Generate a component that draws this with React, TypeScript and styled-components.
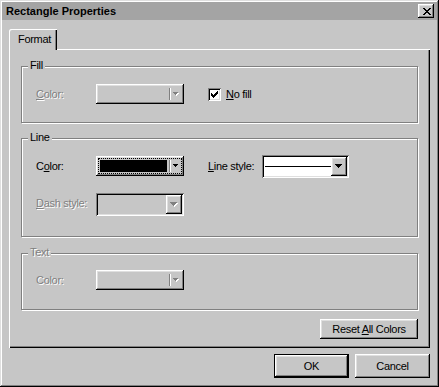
import React from "react";
import styled, { createGlobalStyle, css } from "styled-components";

const FACE = "#c6c6c6";

const GlobalStyle = createGlobalStyle`
  html, body {
    margin: 0;
    padding: 0;
    background: ${FACE};
  }
  body {
    font-family: "Liberation Sans", Arial, sans-serif;
    font-size: 11px;
    letter-spacing: -0.3px;
    color: #000;
  }
  * {
    box-sizing: border-box;
  }
`;

const raised = css`
  box-shadow: inset -1px -1px #000, inset 1px 1px #fff, inset -2px -2px #808080,
    inset 2px 2px #dfdfdf;
`;

const sunken = css`
  box-shadow: inset 1px 1px #808080, inset -1px -1px #fff, inset 2px 2px #000,
    inset -2px -2px #dfdfdf;
`;

const disabledText = css`
  color: #808080;
  text-shadow: 1px 1px 0 #fff;
`;

const Window = styled.div`
  width: 439px;
  height: 387px;
  padding: 2px;
  background: ${FACE};
  box-shadow: inset -1px -1px #000, inset 1px 1px #dfdfdf, inset -2px -2px #808080,
    inset 2px 2px #fff;
  display: flex;
  flex-direction: column;
`;

const TitleBar = styled.div`
  height: 18px;
  background: #a4a4a4;
  display: flex;
  align-items: center;
  justify-content: space-between;
  padding: 0 3px 0 4px;
`;

const Title = styled.span`
  font-weight: bold;
  font-size: 11px;
  letter-spacing: 0;
`;

const CloseButton = styled.div`
  width: 16px;
  height: 14px;
  background: ${FACE};
  ${raised};
  display: flex;
  align-items: center;
  justify-content: center;
  padding-left: 1px;
`;

const Body = styled.div`
  flex: 1;
  display: flex;
  flex-direction: column;
  padding: 9px 7px 7px 7px;
`;

const TabStrip = styled.div`
  display: flex;
  height: 20px;
`;

const Tab = styled.div`
  position: relative;
  z-index: 1;
  width: 48px;
  height: 21px;
  padding: 0 0 1px 9px;
  display: flex;
  align-items: center;
  background: ${FACE};
  border-top-left-radius: 2px;
  box-shadow: inset 1px 1px #fff, inset -1px 0 #000, inset -2px 0 #808080;
`;

const Panel = styled.div`
  height: 299px;
  padding: 17px 12px 9px 12px;
  display: flex;
  flex-direction: column;
  box-shadow: inset 1px 1px #fff, inset -1px -1px #000, inset -2px -2px #808080;
`;

const Group = styled.div<{ $h: number; $pt: number; $mt?: number }>`
  position: relative;
  height: ${(p) => p.$h}px;
  margin-top: ${(p) => p.$mt ?? 0}px;
  padding: ${(p) => p.$pt}px 0 0 14px;
  border: 1px solid #808080;
  box-shadow: inset 1px 1px #fff, 1px 1px #fff;
  display: flex;
  flex-direction: column;
`;

const Legend = styled.span<{ $disabled?: boolean }>`
  position: absolute;
  top: -8px;
  left: 6px;
  padding: 0 2px;
  line-height: 13px;
  background: ${FACE};
  ${(p) => p.$disabled && disabledText};
`;

const Row = styled.div<{ $mt?: number }>`
  display: flex;
  align-items: flex-start;
  margin-top: ${(p) => p.$mt ?? 0}px;
`;

const Label = styled.span<{ $w: number; $disabled?: boolean }>`
  width: ${(p) => p.$w}px;
  line-height: 20px;
  white-space: nowrap;
  ${(p) => p.$disabled && disabledText};
`;

const Key = styled.span`
  text-decoration: underline;
`;

const Trailing = styled.div`
  display: flex;
  align-items: center;
  height: 20px;
  margin-left: 24px;
`;

/* colour picker drawn as a button */
const ColorButton = styled.div`
  width: 88px;
  height: 20px;
  padding: 2px;
  background: ${FACE};
  ${raised};
  display: flex;
`;

const FocusFrame = styled.div<{ $focused?: boolean }>`
  flex: 1;
  display: flex;
  padding: 1px;
  border: 1px dotted ${(p) => (p.$focused ? "#000" : "transparent")};
`;

const Swatch = styled.div<{ $color?: string }>`
  flex: 1;
  background: ${(p) => p.$color ?? "transparent"};
`;

const Separator = styled.div`
  width: 2px;
  margin: 0 1px 0 2px;
  border-left: 1px solid #808080;
  border-right: 1px solid #fff;
`;

const ArrowSlot = styled.div`
  width: 8px;
  display: flex;
  align-items: center;
  justify-content: center;
`;

/* classic drop-down list */
const DropField = styled.div<{ $w: number; $disabled?: boolean }>`
  width: ${(p) => p.$w}px;
  height: 23px;
  padding: 2px;
  background: ${(p) => (p.$disabled ? FACE : "#fff")};
  ${sunken};
  display: flex;
`;

const FieldValue = styled.div`
  flex: 1;
  display: flex;
  align-items: center;
  padding-left: 1px;
`;

const LineSample = styled.div`
  flex: 1;
  height: 1px;
  background: #000;
`;

const DropButton = styled.div`
  width: 16px;
  background: ${FACE};
  ${raised};
  display: flex;
  align-items: center;
  justify-content: center;
`;

const CheckBox = styled.div`
  width: 13px;
  height: 13px;
  padding: 3px;
  background: #fff;
  ${sunken};
  display: flex;
  margin-right: 5px;
`;

const Footer = styled.div`
  display: flex;
  justify-content: flex-end;
  margin-top: 9px;
`;

const ButtonRow = styled.div`
  display: flex;
  justify-content: flex-end;
  gap: 6px;
  margin-top: 6px;
`;

const Button = styled.button<{ $w: number; $h: number; $default?: boolean }>`
  width: ${(p) => p.$w}px;
  height: ${(p) => p.$h}px;
  margin: 0;
  padding: 0 0 1px;
  font: inherit;
  letter-spacing: inherit;
  color: #000;
  background: ${FACE};
  border: ${(p) => (p.$default ? "1px solid #000" : "none")};
  ${raised};
`;

const SMALL = "M0 0h5v1H0zM1 1h3v1H1zM2 2h1v1H2z";
const BIG = "M0 0h7v1H0zM1 1h5v1H1zM2 2h3v1H2zM3 3h1v1H3z";

const Arrow = ({ big, disabled }: { big?: boolean; disabled?: boolean }) => {
  const d = big ? BIG : SMALL;
  const w = big ? 7 : 5;
  const h = big ? 4 : 3;
  return (
    <svg width={w + 1} height={h + 1} viewBox={`0 0 ${w + 1} ${h + 1}`} shapeRendering="crispEdges">
      {disabled && <path d={d} fill="#fff" transform="translate(1 1)" />}
      <path d={d} fill={disabled ? "#808080" : "#000"} />
    </svg>
  );
};

const ColorPicker = ({ color, focused, disabled }: any) => (
  <ColorButton>
    <FocusFrame $focused={focused}>
      <Swatch $color={color} />
      <Separator />
      <ArrowSlot>
        <Arrow disabled={disabled} />
      </ArrowSlot>
    </FocusFrame>
  </ColorButton>
);

const DropDown = ({ width, disabled, children }: any) => (
  <DropField $w={width} $disabled={disabled}>
    <FieldValue>{children}</FieldValue>
    <DropButton>
      <Arrow big disabled={disabled} />
    </DropButton>
  </DropField>
);

export default function App() {
  return (
    <Window>
      <GlobalStyle />
      <TitleBar>
        <Title>Rectangle Properties</Title>
        <CloseButton>
          <svg width="8" height="7" viewBox="0 0 8 7" shapeRendering="crispEdges">
            <path
              d="M0 0h2v1H0zM6 0h2v1H6zM1 1h2v1H1zM5 1h2v1H5zM2 2h4v1H2zM3 3h2v1H3zM2 4h4v1H2zM1 5h2v1H1zM5 5h2v1H5zM0 6h2v1H0zM6 6h2v1H6z"
              fill="#000"
            />
          </svg>
        </CloseButton>
      </TitleBar>

      <Body>
        <TabStrip>
          <Tab>Format</Tab>
        </TabStrip>
        <Panel>
          <Group $h={57} $pt={17}>
            <Legend>Fill</Legend>
            <Row>
              <Label $w={60} $disabled>
                <Key>C</Key>olor:
              </Label>
              <ColorPicker disabled />
              <Trailing>
                <CheckBox>
                  <svg width="7" height="7" viewBox="0 0 7 7" shapeRendering="crispEdges">
                    <path
                      d="M6 0h1v1H6zM5 1h2v1H5zM0 2h1v1H0zM4 2h3v1H4zM0 3h2v1H0zM3 3h3v1H3zM0 4h5v1H0zM1 5h3v1H1zM2 6h1v1H2z"
                      fill="#000"
                    />
                  </svg>
                </CheckBox>
                <span>
                  <Key>N</Key>o fill
                </span>
              </Trailing>
            </Row>
          </Group>

          <Group $h={99} $pt={17} $mt={15}>
            <Legend>Line</Legend>
            <Row>
              <Label $w={60}>
                C<Key>o</Key>lor:
              </Label>
              <ColorPicker color="#000" focused />
              <Trailing>
                <Label $w={54}>
                  <Key>L</Key>ine style:
                </Label>
                <DropDown width={87}>
                  <LineSample />
                </DropDown>
              </Trailing>
            </Row>
            <Row $mt={17}>
              <Label $w={60} $disabled>
                <Key>D</Key>ash style:
              </Label>
              <DropDown width={88} disabled />
            </Row>
          </Group>

          <Group $h={57} $pt={16} $mt={16}>
            <Legend $disabled>Text</Legend>
            <Row>
              <Label $w={60} $disabled>
                Color:
              </Label>
              <ColorPicker disabled />
            </Row>
          </Group>

          <Footer>
            <Button $w={98} $h={20}>
              Reset <Key>A</Key>ll Colors
            </Button>
          </Footer>
        </Panel>

        <ButtonRow>
          <Button $w={75} $h={24} $default>
            OK
          </Button>
          <Button $w={75} $h={24}>
            Cancel
          </Button>
        </ButtonRow>
      </Body>
    </Window>
  );
}
